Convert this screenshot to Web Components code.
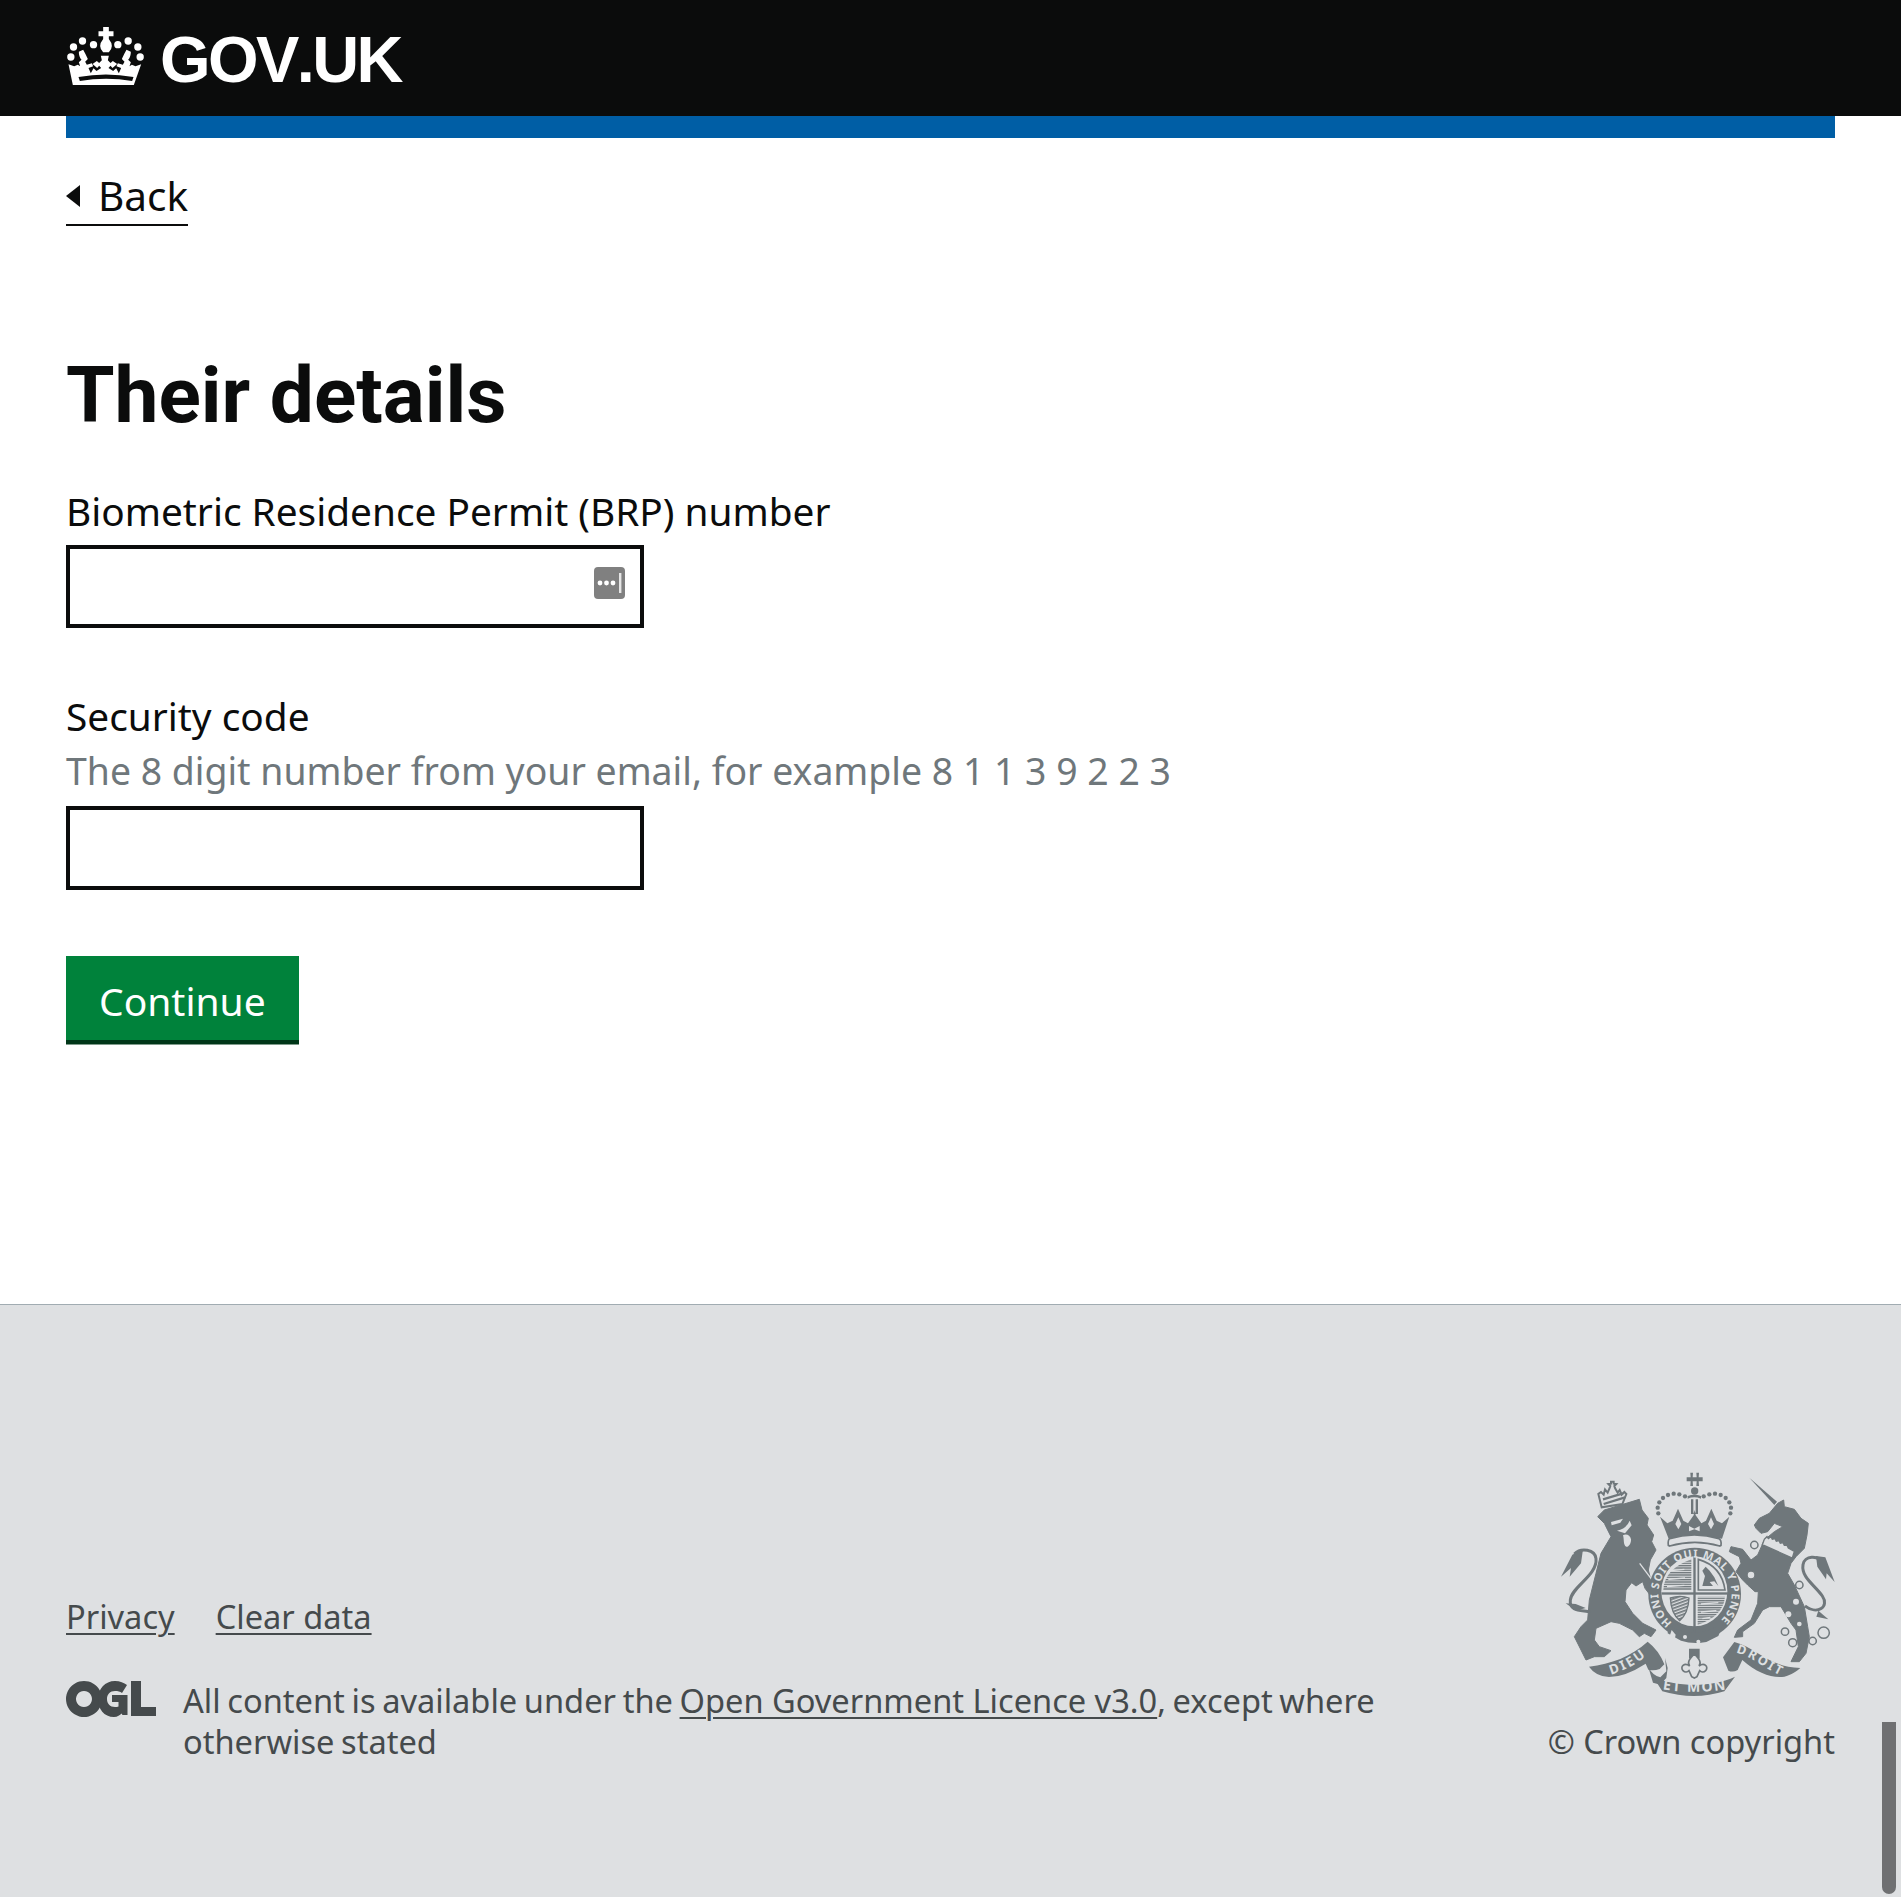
<!DOCTYPE html>
<html lang="en">
<head>
<meta charset="utf-8">
<title>Their details - GOV.UK</title>
<style>
  html, body { margin: 0; padding: 0; background: #fff; }
  body { position: relative; width: 1901px; height: 1899px; overflow: hidden; font-family: "Noto Sans", "Liberation Sans", sans-serif; color: #0b0c0c; }
  main { display: block; padding: 36px 66px 0; height: 1166px; box-sizing: border-box; }
</style>
</head>
<body>
<gov-header></gov-header>
<main>
  <back-link>Back</back-link>
  <page-heading>Their details</page-heading>
  <form-field label="Biometric Residence Permit (BRP) number" manager></form-field>
  <form-field label="Security code" hint="The 8 digit number from your email, for example 8 1 1 3 9 2 2 3"></form-field>
  <gov-button>Continue</gov-button>
</main>
<gov-footer></gov-footer>
<scroll-thumb></scroll-thumb>

<script>
// Crown from the GOV.UK logotype
class CrownLogo extends HTMLElement {
	constructor() {
		super();
		this.attachShadow({ mode: 'open' });
		this.shadowRoot.innerHTML = `
      <style>:host { display: block; width: 78px; height: 58px; } svg { display: block; }</style>
      <svg width="78" height="58" viewBox="0 0 231 174" fill="#fff">
        <circle cx="45" cy="42" r="11"/><circle cx="78" cy="53" r="11"/><circle cx="151" cy="53" r="11"/><circle cx="182" cy="42" r="11"/>
        <circle cx="18" cy="60" r="11"/><circle cx="211" cy="60" r="11"/><circle cx="10" cy="90" r="11"/><circle cx="218" cy="90" r="11"/>
        <path d="M107 0h17v13h14v15h-14v8q18 22 0 40h-17q-18-18 0-40v-8h-14v-15h14z"/>
        <path d="M3 112l17 6 11-5 7 5-4-12 8-8q-8-8-8-24l13-6q8 14 14 28l-8 8 5 9 15-4 4 9-14 5 7 16 8-15 9 8 14-9 -6-7 -6 7-14-12 13-9 7 6 8-8-3-14h24l-3 14 8 8 7-6 13 9-14 12-6-7-6 7 14 9 9-8 8 15 7-16-14-5 4-9 15 4 5-9-8-8q6-14 14-28l13 6q0 16-8 24l8 8-4 12 7-5 11 5 17-6-22 62-183 0z"/>
        <path d="M33 150q82-15 165 0l-4 12q-78-13-157 0z" fill="#0b0c0c"/>
      </svg>`;
	}
}
customElements.define('crown-logo', CrownLogo);

class GovHeader extends HTMLElement {
	constructor() {
		super();
		this.attachShadow({ mode: 'open' });
		this.shadowRoot.innerHTML = `
      <style>
        :host { display: block; }
        .bar { background: #0b0c0c; height: 116px; box-sizing: border-box; padding: 27px 0 0 67px; display: flex; align-items: flex-start; gap: 15px; }
        .name { color: #fff; font: 700 65px/1 "Liberation Sans", Arial, sans-serif; font-kerning: none; letter-spacing: -2.6px; }
        .wrap { padding: 0 66px; }
        .blue { background: #005ea5; height: 22px; }
      </style>
      <div class="bar"><crown-logo></crown-logo><span class="name">GOV.UK</span></div>
      <div class="wrap"><div class="blue"></div></div>`;
	}
}
customElements.define('gov-header', GovHeader);

class BackLink extends HTMLElement {
	constructor() {
		super();
		this.attachShadow({ mode: 'open' });
		this.shadowRoot.innerHTML = `
      <style>
        :host { display: table; font-size: 40.5px; line-height: 46px; color: #0b0c0c; border-bottom: 2px solid #0b0c0c; padding-bottom: 5px; margin-top: -1px; }
        .row { display: flex; align-items: center; height: 46px; }
        .arrow { width: 0; height: 0; border: 11px solid transparent; border-left: 0; border-right: 14px solid #0b0c0c; margin-right: 18px; }
      </style>
      <div class="row"><span class="arrow"></span><slot></slot></div>`;
	}
}
customElements.define('back-link', BackLink);

class PageHeading extends HTMLElement {
	constructor() {
		super();
		this.attachShadow({ mode: 'open' });
		this.shadowRoot.innerHTML = `
      <style>:host { display: block; margin-top: 119px; font-family: Roboto, "Noto Sans", sans-serif; font-size: 78.4px; font-weight: 700; line-height: 100px; color: #0b0c0c; margin-bottom: 39px; }</style>
      <slot></slot>`;
	}
}
customElements.define('page-heading', PageHeading);

class FormField extends HTMLElement {
	constructor() {
		super();
		this.attachShadow({ mode: 'open' });
		const hint = this.getAttribute('hint');
		const manager = this.hasAttribute('manager');
		this.shadowRoot.innerHTML = `
      <style>
        :host { display: block; margin-bottom: 61px; line-height: 54px; }
        label { display: block; color: #0b0c0c; font-size: 38.8px; }
        .hint { color: #6f777b; font-size: 37.4px; margin-top: 1px; }
        .box { position: relative; width: 578px; height: 83px; box-sizing: border-box; border: 4px solid #0b0c0c; background: #fff; margin-top: 7px; }
        .hint + .box { height: 84px; margin-top: 8px; }
        .icon { position: absolute; right: 15px; top: 18px; display: block; }
      </style>
      <label>${this.getAttribute('label')}</label>
      ${hint ? `<div class="hint">${hint}</div>` : ''}
      <div class="box">
        ${manager ? `<svg class="icon" width="31" height="32" viewBox="0 0 31 32">
          <rect width="31" height="32" rx="4" fill="#808080"/>
          <circle cx="6" cy="16" r="2.4" fill="#fff"/><circle cx="12.5" cy="16" r="2.4" fill="#fff"/><circle cx="19" cy="16" r="2.4" fill="#fff"/>
          <rect x="25" y="6" width="2.400" height="20" fill="#e6e6e6"/>
        </svg>` : ''}
      </div>`;
	}
}
customElements.define('form-field', FormField);

class GovButton extends HTMLElement {
	constructor() {
		super();
		this.attachShadow({ mode: 'open' });
		this.shadowRoot.innerHTML = `
      <style>
        :host { display: block; width: fit-content; background: #00823b; color: #fff; font-size: 39px; line-height: 84px; height: 81px; padding: 3px 33px 0; margin-top: 66px; box-shadow: 0 4px 0 #003618, 0 5px 0 #7f9b8b; }
      </style>
      <slot></slot>`;
	}
}
customElements.define('gov-button', GovButton);

// Royal coat of arms, coordinates are 3x the pixel size
class RoyalArms extends HTMLElement {
	constructor() {
		super();
		this.attachShadow({ mode: 'open' });
		const bg = '#dee0e2';
		const dots = [[292,160],[290,143],[295,127],[306,114],[321,105],[338,101],[355,103],[372,109],[428,109],[445,103],[462,101],[479,105],[494,114],[505,127],[510,143],[508,160]];
		const rings = [[580,255,11],[570,345,12],[715,375,11],[672,515,11],[695,548,12],[755,543,11],[788,518,17]];
		this.shadowRoot.innerHTML = `
      <style>:host { display: block; width: 290px; height: 250px; margin-right: -16px; } svg { display: block; } text { font-family: "Noto Sans", sans-serif; font-weight: 700; }</style>
      <svg width="290" height="250" viewBox="0 0 870 750" fill="#6f777b">
        <defs>
          <path id="garter" d="M 333 488 A 110 110 0 1 1 471 488"/>
          <path id="dieu" d="M 150 644 C 190 632 230 612 268 578"/>
          <path id="etmon" d="M 305 688 C 360 698 440 698 495 688"/>
          <path id="droit" d="M 525 578 C 570 588 610 625 665 650"/>
          <pattern id="stripe" width="7" height="7" patternUnits="userSpaceOnUse"><rect width="7" height="4"/></pattern>
          <pattern id="harp" width="9" height="9" patternUnits="userSpaceOnUse" patternTransform="rotate(70)"><rect width="5" height="9"/></pattern>
        </defs>

        <!-- lion -->
        <path stroke="#6f777b" stroke-width="3" stroke-linejoin="round" d="M110 170L130 150 235 118 243 150 262 175 258 195 278 225 272 245 285 270 268 300 262 330 272 370 295 385 305 415 295 430 275 415 252 385 245 365 225 378 212 368 195 390 192 425 215 460 245 490 285 510 270 530 250 520 235 530 215 510 175 490 150 485 105 505 100 540 115 560 150 572 130 590 100 590 75 600 60 570 40 530 60 500 80 480 85 420 105 340 120 280 150 230 130 190z"/>
        <path d="M150 186l36-10-8 12-26 8zM168 212q26-4 38-30l6 14-20 24zM186 226c8-6 22-2 24 12 1 12-8 24-14 22-10-4-6-22-10-34z" fill="${bg}"/>
        <path d="M236 310L290 382" stroke="${bg}" stroke-width="4"/>
        <path d="M88 456C62 450 24 456 28 420 32 380 110 346 105 296 102 268 60 262 40 282" fill="none" stroke="#6f777b" stroke-width="9"/>
        <path d="M66 268L34 284 0 350 30 324 26 350 60 310z"/>
        <path d="M14 430l30 2 30 12-28 8z"/>
        <path d="M122 142l-10-40 8-6 8 8 4-16 8 10 6-14 2-6-6-6 8-1v-6h8v6l8 1-6 6 2 6 8 14 6-8 6 14 8-8 6 6-12 30z" fill="${bg}" stroke="#6f777b" stroke-width="6"/>
        <path d="M126 118l60-18M128 132l64-20" stroke="#6f777b" stroke-width="7"/>

        <!-- shield and garter -->
        <circle cx="401" cy="402" r="139"/>
        <ellipse cx="400" cy="394" rx="99" ry="105" fill="${bg}"/>
        <rect x="397" y="288" width="7" height="226"/>
        <rect x="302" y="397" width="198" height="7"/>
        <path d="M307 390q2-62 84-92v92z" fill="url(#stripe)"/>
        <path d="M330 332l40-4M322 358l50-4M318 380l52-4" stroke="${bg}" stroke-width="4"/>
        <path d="M412 298q70 20 80 92h-80z" fill="none" stroke="#6f777b" stroke-width="5"/>
        <path d="M424 378l8-30-8-16 10-12 12 12 14 20 12 26-12-14-14 2 10 12z"/>
        <path d="M410 410h82q-6 60-82 84z" fill="url(#stripe)"/>
        <path d="M420 432l52-4M420 456l46-4M424 476l24-4" stroke="${bg}" stroke-width="4"/>
        <path d="M328 414q30-10 56 0-2 46-28 68-26-22-28-68z" fill="url(#harp)" stroke="#6f777b" stroke-width="4"/>
        <text font-size="33" fill="${bg}"><textPath href="#garter" textLength="530">HONI SOIT QUI MAL Y PENSE</textPath></text>
        <path d="M322 494l30 16q50 22 110-8l30-24-20 50-36 18q-40 8-76-4l-40-22z"/>
        <path d="M332 510l-6 18 14 14 4-18z" fill="${bg}"/>
        <circle cx="372" cy="531" r="6" fill="${bg}"/><circle cx="412" cy="545" r="6" fill="${bg}"/>

        <!-- crown -->
        ${dots.map(([x, y]) => `<circle cx="${x}" cy="${y}" r="6.5"/>`).join('')}
        <path d="M388 38h8l-1 14h12l-1-14h8l-1 14h12v12h-12l1 14h-8l1-14h-12l1 14h-8l1-14h-12v-12h12z"/>
        <circle cx="401" cy="93" r="11"/>
        <path d="M380 108q20-8 40 0v8q-20-8-40 0z"/>
        <path d="M390 118h7v44h-7zM404 118h7v44h-7z"/>
        <path d="M297 170l22 20 16-8 16-36 16 36 14 8 18-26-4-6h4l2-8 2 8h4l-4 6 18 26 14-8 16-36 16 36 16 8 22-20-22 66q-80-14-160 0z"/>
        <path d="M343 192l9-20 9 20-9 16zM441 192l9-20 9 20-9 16zM384 198l16 8 16-8v16l-16-6-16 6z" fill="${bg}"/>
        <path d="M326 236q74-22 148 0 8 4 6 20l-4 2q-74-22-150 0l-4-2q-2-16 4-20z" fill="${bg}" stroke="#6f777b" stroke-width="5"/>

        <!-- unicorn -->
        <path d="M565 53L648 125 640 135z"/>
        <path stroke="#6f777b" stroke-width="3" stroke-linejoin="round" d="M580 195L595 175 625 160 650 130 668 120 670 140 700 148 720 175 742 190 738 225 730 265 705 290 690 310 680 340 700 375 730 440 740 500 745 530 735 580 715 605 690 605 712 560 705 510 690 490 660 440 625 440 605 450 580 490 545 515 545 530 520 532 530 510 570 480 590 430 592 395 582 395 560 375 545 360 525 335 540 310 535 290 505 275 510 260 545 268 570 300 590 285 610 240 640 215 665 200 640 190 620 215 600 220 585 205z"/>
        <path d="M610 238l8-8 4 6 8-6 4 8 8-2 4 8 8-2 4 8 8-2 4 8 8 0 4 8 18 10-6 20-90-40z" fill="${bg}" stroke="#6f777b" stroke-width="4"/>
        <path d="M732 438C770 466 806 440 784 408 762 376 720 352 726 314 730 288 770 282 790 312" fill="none" stroke="#6f777b" stroke-width="9"/>
        <path d="M765 288l28 4 28 74-24-26-2 18-26-38z"/>
        <path d="M772 452l30 26-36-8z"/>
        ${rings.map(([x, y, r]) => `<circle cx="${x}" cy="${y}" r="${r}" fill="${bg}" stroke="#6f777b" stroke-width="4.5"/>`).join('')}
        <circle cx="705" cy="425" r="9" fill="${bg}"/><circle cx="682" cy="463" r="9" fill="${bg}"/><circle cx="715" cy="492" r="7" fill="${bg}"/>

        <!-- motto -->
        <path d="M84 620C150 612 210 590 260 545q34 26 50 68l-14 14q-18 6-34 2l-8-18q-62 40-110 40-40-2-60-31z"/>
        <path d="M262 622q14 26 36 30l18-18-4-40 8 30-4 30-18 20-22-6z"/>
        <path d="M276 650c70 32 178 32 246 0l-32 44q-90 28-186 0z"/>
        <path d="M520 546l-34 46 16 40q14 6 28-2l14-30c44 40 92 56 126 50 20-4 40-18 48-26-90 0-130-60-198-78z"/>
        <text font-size="40" fill="${bg}"><textPath href="#dieu" textLength="118">DIEU</textPath></text>
        <text font-size="42" fill="${bg}"><textPath href="#etmon" textLength="190">ET MON</textPath></text>
        <text font-size="38" fill="${bg}"><textPath href="#droit" textLength="148">DROIT</textPath></text>
        <path d="M384 566h32v30l-16-6-16 6z"/>
        <path d="M400 582c16 16 22 26 14 36 16-12 30 2 20 14-6 6-14 4-18 0l-8 18-8 4-8-4-8-18c-4 4-12 6-18 0-10-12 4-26 20-14-8-10-2-20 14-36z" fill="${bg}" stroke="#6f777b" stroke-width="5"/>
      </svg>`;
	}
}
customElements.define('royal-arms', RoyalArms);

class GovFooter extends HTMLElement {
	constructor() {
		super();
		this.attachShadow({ mode: 'open' });
		this.shadowRoot.innerHTML = `
      <style>
        :host { display: block; height: 593px; box-sizing: border-box; background: #dee0e2; border-top: 1px solid #a1acb2; color: #454a4c; font-size: 32.6px; line-height: 41px; padding: 155px 66px 0; }
        .cols { display: flex; justify-content: space-between; align-items: flex-end; }
        a { color: inherit; text-decoration: underline; text-decoration-thickness: 2px; text-underline-offset: 4px; }
        .links { display: flex; gap: 41px; margin-bottom: 43px; }
        .licence { display: flex; gap: 27px; width: 1420px; word-spacing: -1.8px; }
        .licence a { word-spacing: 0; }
        .ogl { flex: none; display: block; margin-top: 1px; }
        .right { display: flex; flex-direction: column; align-items: flex-end; }
        .copy { margin-top: 11px; white-space: nowrap; }
      </style>
      <div class="cols">
        <div class="left">
          <div class="links"><a>Privacy</a><a>Clear data</a></div>
          <div class="licence">
            <svg class="ogl" width="90" height="36" viewBox="0 0 90 36" fill="#454a4c">
              <path fill-rule="evenodd" d="M18 0a18 18 0 1 0 .01 0zM18 10a8 8 0 1 1-.01 0z"/>
              <path d="M49 0c5 0 9 1.700 12 4l-5 8c-2-1.500-4-2-7-2-5 0-8 3.500-8 8s3 8 8 8c1.500 0 2.500-.2 3.500-.6V21h-6.500v-7h15.500v20h-5l-1-1.500C54 34 51.500 36 48 36c-10 0-16-8-16-18S39 0 49 0z"/>
              <path d="M65 0h10v26h15v9H65z"/>
            </svg>
            <div>All content is available under the <a>Open Government Licence v3.0</a>, except where otherwise stated</div>
          </div>
        </div>
        <div class="right">
          <royal-arms></royal-arms>
          <div class="copy">© Crown copyright</div>
        </div>
      </div>`;
	}
}
customElements.define('gov-footer', GovFooter);

// Overlay scrollbar thumb sitting over the footer
class ScrollThumb extends HTMLElement {
	constructor() {
		super();
		this.attachShadow({ mode: 'open' });
		this.shadowRoot.innerHTML = `
      <style>:host { display: block; position: absolute; left: 1882px; top: 1722px; width: 14px; height: 172px; background: #6f7072; border-radius: 0 0 7px 7px; }</style>`;
	}
}
customElements.define('scroll-thumb', ScrollThumb);
</script>
</body>
</html>
